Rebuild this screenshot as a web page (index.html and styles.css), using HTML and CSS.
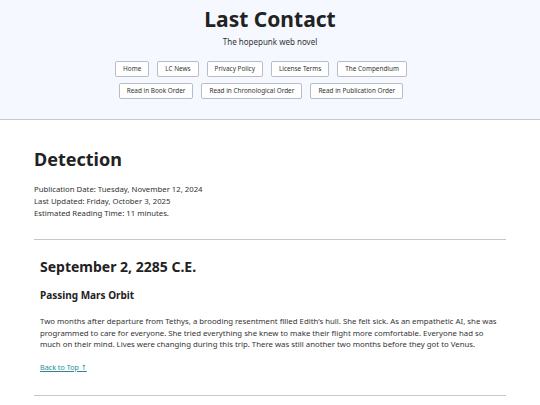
FILE: index.html
```html
<!DOCTYPE html>
<html lang="en">
<head>
<meta charset="utf-8">
<title>Last Contact</title>
<link rel="stylesheet" href="styles.css">
</head>
<body>
<header class="site-header">
  <h1 class="site-title">Last Contact</h1>
  <p class="tagline">The hopepunk web novel</p>
  <nav class="nav">
    <div class="nav-row">
      <a class="btn" href="#">Home</a>
      <a class="btn" href="#">LC News</a>
      <a class="btn" href="#">Privacy Policy</a>
      <a class="btn" href="#">License Terms</a>
      <a class="btn" href="#">The Compendium</a>
    </div>
    <div class="nav-row">
      <a class="btn" href="#">Read in Book Order</a>
      <a class="btn" href="#">Read in Chronological Order</a>
      <a class="btn" href="#">Read in Publication Order</a>
    </div>
  </nav>
</header>
<main class="main">
  <h2 class="chapter-title">Detection</h2>
  <div class="meta">
    <div>Publication Date: Tuesday, November 12, 2024</div>
    <div>Last Updated: Friday, October 3, 2025</div>
    <div>Estimated Reading Time: 11 minutes.</div>
  </div>
  <hr class="rule">
  <section class="entry">
    <h3 class="entry-date">September 2, 2285 C.E.</h3>
    <h4 class="entry-sub">Passing Mars Orbit</h4>
    <p class="entry-text">Two months after departure from Tethys, a brooding resentment filled Edith’s hull. She felt sick. As an empathetic AI, she was programmed to care for everyone. She tried everything she knew to make their flight more comfortable. Everyone had so much on their mind. Lives were changing during this trip. There was still another two months before they got to Venus.</p>
    <a class="back" href="#">Back to Top ↑</a>
  </section>
  <hr class="rule rule-end">
</main>
</body>
</html>
```
FILE: styles.css
```css
* { box-sizing: border-box; }
html, body { margin: 0; padding: 0; }
body {
  font-family: "Noto Sans", "DejaVu Sans", sans-serif;
  color: #222;
  background: #fff;
}
.site-header {
  background: #f5f8ff;
  border-bottom: 1px solid #c8c8cc;
  padding: 6px 0 20px;
  text-align: center;
}
.site-title {
  margin: 0;
  font-size: 21px;
  line-height: 26px;
  font-weight: 700;
  color: #222;
}
.tagline {
  margin: 4px 0 0;
  font-size: 8px;
  line-height: 11px;
  color: #333;
}
.nav {
  margin-top: 14px;
  padding-right: 18px;
  display: flex;
  flex-direction: column;
  align-items: center;
  gap: 6px;
}
.nav-row {
  display: flex;
  gap: 8px;
  justify-content: center;
}
.btn {
  display: block;
  font-size: 6.4px;
  line-height: 14px;
  padding: 0 7px;
  border: 1px solid #b8bcc6;
  border-radius: 2px;
  background: #fff;
  color: #333;
  text-decoration: none;
}
.main {
  padding: 27px 34px 0;
}
.chapter-title {
  margin: 0;
  font-size: 18px;
  line-height: 24px;
  font-weight: 700;
}
.meta {
  margin-top: 12px;
  font-size: 7.75px;
  line-height: 12px;
  color: #333;
}
.rule {
  margin: 20px 0 0;
  border: 0;
  border-top: 1px solid #c8c8c8;
  height: 0;
}
.entry {
  padding: 18px 6px 20px;
}
.entry-date {
  margin: 0;
  font-size: 14px;
  line-height: 18px;
  font-weight: 700;
}
.entry-sub {
  margin: 12px 0 0;
  font-size: 10px;
  line-height: 14px;
  font-weight: 700;
}
.entry-text {
  margin: 14px 0 0;
  font-size: 7.8px;
  line-height: 11.7px;
  color: #333;
}
.back {
  display: inline-block;
  margin-top: 11px;
  font-size: 7.2px;
  line-height: 11px;
  color: #2a8a94;
}
.rule-end { margin-top: 0; }
```
